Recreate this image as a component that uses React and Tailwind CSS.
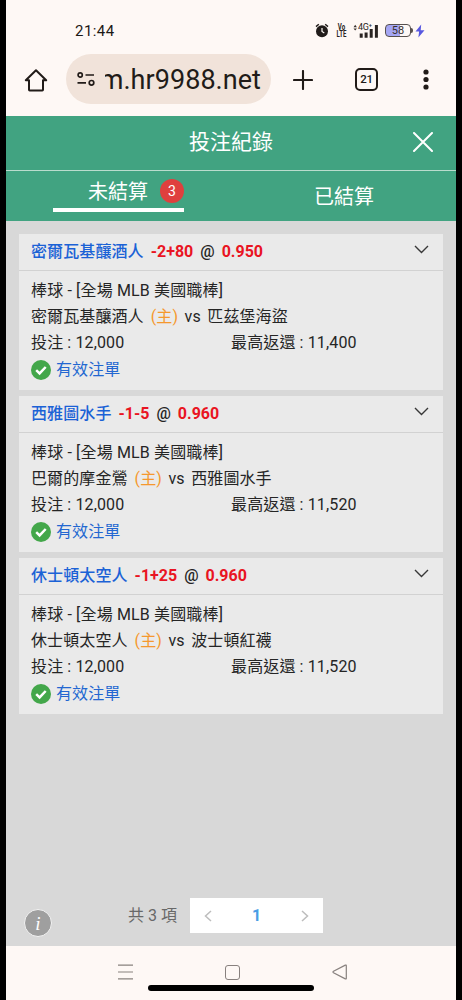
import React from "react";

const bets = [
  { pick: "密爾瓦基釀酒人", line: "-2+80", odds: "0.950", home: "密爾瓦基釀酒人", away: "匹茲堡海盜", stake: "12,000", ret: "11,400" },
  { pick: "西雅圖水手", line: "-1-5", odds: "0.960", home: "巴爾的摩金鶯", away: "西雅圖水手", stake: "12,000", ret: "11,520" },
  { pick: "休士頓太空人", line: "-1+25", odds: "0.960", home: "休士頓太空人", away: "波士頓紅襪", stake: "12,000", ret: "11,520" },
];

function StatusBar() {
  return (
    <div className="flex h-[54px] items-center pt-[7px] pl-[69px]">
      <span className="w-[240px] text-[15px] leading-[18px] tracking-[0.45px] text-[#1d1816]">21:44</span>
      <svg width="14" height="15" viewBox="0 0 14 15" className="shrink-0">
        <circle cx="7" cy="8.3" r="6" fill="#211c1a" />
        <path d="M1 3.6 3.8 1.2M13 3.6 10.2 1.2" stroke="#211c1a" strokeWidth="1.4" />
        <path d="M7 5v3.5l2.3 1.4" stroke="#fef8f5" strokeWidth="1.2" fill="none" />
      </svg>
      <div className="ml-[7px] flex w-[11px] scale-x-[0.68] flex-col items-center text-[9px] leading-[7px] font-bold text-[#2a2422]">
        <span>Vo</span>
        <span>LTE</span>
      </div>
      <div className="relative ml-[6px] h-[14px] w-[26px]">
        <svg width="26" height="14" viewBox="0 0 26 14">
          <path d="M0.5 3.2 2.2.8 3.9 3.2zM0.5 4.4h3.4L2.2 6.6z" fill="#39312e" />
          <path d="M8.2 9.5v4.3M13.1 8.5v5.3M18.2 5v8.8M23.4 1v12.8" stroke="#2a2422" strokeWidth="3" />
        </svg>
        <span className="absolute top-0 left-[5px] text-[9px] leading-[7px] tracking-[-0.3px] text-[#2a2422]">4G⁺</span>
      </div>
      <div className="ml-[6px] flex h-[13px] w-[26px] items-center justify-center rounded-[4px] border border-[#57504e] bg-[linear-gradient(90deg,#a5a6f4_58%,#fef8f5_58%)] text-[11px] leading-none text-[#39312e]">
        58
      </div>
      <div className="h-[5px] w-[2px] rounded-r bg-[#57504e]" />
      <svg width="10" height="14" viewBox="0 0 10 14" className="ml-[1.5px]">
        <path d="M6.2 .5.5 7.5h3.6L3.4 13.5 9.5 6.2H5.7z" fill="#5858e0" />
      </svg>
    </div>
  );
}

function BrowserBar() {
  return (
    <div className="flex h-[61.5px] items-start text-[#211b18]">
      <svg width="24" height="24" viewBox="0 0 24 24" className="mt-[14px] ml-[18px]" fill="none" stroke="currentColor" strokeWidth="2" strokeLinejoin="round" strokeLinecap="round">
        <path d="M1.8 12.2 12 2.2l10.2 10H19v9.6q0 .7-.7.7H5.7q-.7 0-.7-.7v-9.6z" />
      </svg>
      <div className="ml-[18px] flex h-[50px] w-[205px] items-center rounded-full bg-[#f1e3da] pl-[10px]">
        <svg width="20" height="14" viewBox="0 0 20 14" fill="none" stroke="currentColor" strokeWidth="1.7">
          <circle cx="4.2" cy="3" r="2.1" />
          <path d="M9.5 3h8.5M1.5 10.8h8.5" />
          <circle cx="15.5" cy="10.8" r="2.3" />
        </svg>
        <div className="ml-[9px] flex w-[156px] justify-end overflow-hidden">
          <span className="mt-[2px] text-[27px] leading-8 tracking-[0.05px]">m.hr9988.net</span>
        </div>
      </div>
      <svg width="20" height="20" viewBox="0 0 20 20" className="mt-[16px] ml-[22px]" stroke="currentColor" strokeWidth="2.1" strokeLinecap="round">
        <path d="M10 1v18M1 10h18" />
      </svg>
      <div className="mt-[14px] ml-[42px] flex h-[23px] w-[23px] items-center justify-center rounded-[5px] border-2 border-[#211b18] text-[11.5px] font-medium tracking-[-0.3px]">21</div>
      <svg width="6" height="22" viewBox="0 0 6 22" className="mt-[15px] ml-[45px]" fill="currentColor">
        <circle cx="3" cy="3" r="2.6" />
        <circle cx="3" cy="10.5" r="2.6" />
        <circle cx="3" cy="18" r="2.6" />
      </svg>
    </div>
  );
}

function Header() {
  return (
    <header className="h-[105px] bg-[#41a381] text-white">
      <div className="flex h-[55px] items-center border-b border-[#b9dccd] pb-[2px] pl-[183px]">
        <h1 className="w-[224px] text-[21px] leading-6">投注紀錄</h1>
        <svg width="20" height="20" viewBox="0 0 20 20" stroke="white" strokeWidth="2" strokeLinecap="round">
          <path d="M1 1l18 18M19 1L1 19" />
        </svg>
      </div>
      <div className="flex text-[20px]">
        <div className="ml-[47px] flex h-[41px] w-[131px] items-center border-b-[4px] border-white pl-[35px]">
          <span className="mt-[6px] leading-6">未結算</span>
          <span className="mt-[4px] ml-[12px] flex h-6 w-6 items-center justify-center rounded-full bg-[#df403e] text-[14px]">3</span>
        </div>
        <span className="mt-[14px] ml-[130px] leading-6">已結算</span>
      </div>
    </header>
  );
}

function BetCard({ bet }) {
  return (
    <article className="h-[156px] bg-[#eaeaea] text-[16px] leading-[26.2px] text-[#252525]">
      <div className="flex h-[37px] items-center border-b border-[#d2d2d2] pl-[12.5px]">
        <div className="w-[383px] pt-px whitespace-pre">
          <span className="font-medium tracking-[0.1px] text-[#1b62d6]">{bet.pick}</span>
          <span className="ml-[7px] font-bold text-[#e91422]">{bet.line}</span>
          <span className="mx-[7px] font-medium">@</span>
          <span className="font-bold text-[#e91422]">{bet.odds}</span>
        </div>
        <svg width="15" height="9" viewBox="0 0 15 9" className="mb-[4px] shrink-0" fill="none" stroke="#383838" strokeWidth="1.4">
          <path d="M1 1l6.5 6.5L14 1" />
        </svg>
      </div>
      <div className="pt-[7px] pl-[12.5px] whitespace-pre">
        <div className="tracking-[0.15px]">棒球 - [全場 MLB 美國職棒]</div>
        <div className="tracking-[0.1px]">
          {bet.home}<span className="ml-[7px] text-[#f5982d]">(主)</span><span className="mx-[6.5px]">vs</span>{bet.away}
        </div>
        <div className="flex tracking-[0.13px]">
          <span className="w-[200px]">投注 : {bet.stake}</span>
          <span>最高返還 : {bet.ret}</span>
        </div>
        <div className="flex items-center">
          <svg width="20" height="20" viewBox="0 0 20 20">
            <circle cx="10" cy="10" r="10" fill="#43a74a" />
            <path d="M5.2 10.2 8.6 13.4 14.7 7" fill="none" stroke="white" strokeWidth="2.5" />
          </svg>
          <span className="mt-px ml-[5px] tracking-[0.1px] text-[#2367d1]">有效注單</span>
        </div>
      </div>
    </article>
  );
}

function Footer() {
  return (
    <div className="flex items-start">
      <div className="mt-[11px] ml-[18px] flex h-[28px] w-[28px] items-center justify-center rounded-full border-[1.5px] border-[#f3f3f3] bg-[#9f9f9f] font-['Liberation_Serif',serif] text-[19px] leading-none text-white italic">i</div>
      <span className="mt-[6px] ml-[76px] w-[62px] text-[16px] leading-6 text-[#686868]">共 3 項</span>
      <div className="flex h-[35px] w-[133px] items-center bg-white">
        <svg width="8" height="12" viewBox="0 0 8 12" className="ml-[14px]" fill="none" stroke="#bdbdbd" strokeWidth="1.5">
          <path d="M7 1 1.5 6 7 11" />
        </svg>
        <span className="ml-[40px] w-[49px] text-[16px] font-bold text-[#4a9de5]">1</span>
        <svg width="8" height="12" viewBox="0 0 8 12" fill="none" stroke="#bdbdbd" strokeWidth="1.5">
          <path d="M1 1 6.5 6 1 11" />
        </svg>
      </div>
    </div>
  );
}

function SystemNav() {
  return (
    <nav className="h-[54px] bg-[#fef8f5]">
      <div className="flex h-[39px] items-center pt-[13px] pl-[111px]">
        <svg width="17" height="16" viewBox="0 0 17 16" stroke="#88817e" strokeWidth="1.2">
          <path d="M1 1.2h15M1 8h15M1 14.8h15" />
        </svg>
        <div className="ml-[91px] h-[15px] w-[15px] rounded-[3px] border-[1.2px] border-[#88817e]" />
        <svg width="16" height="16" viewBox="0 0 16 16" className="ml-[92px]" fill="none" stroke="#88817e" strokeWidth="1.2" strokeLinejoin="round">
          <path d="M1.5 7.3 13.3 1.1q1-.4 1 .7v12.4q0 1.1-1 .7L1.5 8.7q-1-.7 0-1.4z" />
        </svg>
      </div>
      <div className="ml-[142px] h-[6px] w-[166px] rounded-full bg-black" />
    </nav>
  );
}

export default function App() {
  return (
    <div lang="zh-Hant" className="h-[1000px] w-[462px] overflow-hidden bg-black px-[6px] font-[Roboto,'Noto_Sans_CJK_TC',sans-serif]">
      <div className="flex h-full w-[450px] flex-col bg-[#fef8f5]">
        <StatusBar />
        <BrowserBar />
        <Header />
        <main className="flex h-[725.5px] flex-col bg-[#d8d8d8]">
          <div className="flex flex-col gap-[6.2px] pt-[13px] pr-[13px] pl-[12.5px]">
            {bets.map((bet) => (
              <BetCard key={bet.pick} bet={bet} />
            ))}
          </div>
          <div className="mt-auto h-[48px]">
            <Footer />
          </div>
        </main>
        <SystemNav />
      </div>
    </div>
  );
}
